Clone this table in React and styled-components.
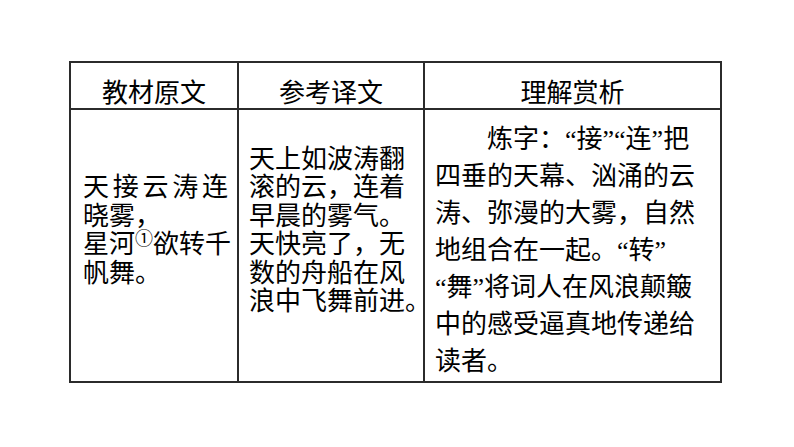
import React from 'react';
import styled, { createGlobalStyle } from 'styled-components';

const GlobalStyle = createGlobalStyle`
  html, body {
    margin: 0;
    padding: 0;
    background: #ffffff;
  }
  body {
    font-family: "Liberation Serif", "Noto Sans CJK SC", serif;
    color: #000000;
  }
`;

const Page = styled.div`
  width: 794px;
  height: 447px;
  box-sizing: border-box;
  padding: 61px 0 0 69px;
`;

const Table = styled.table`
  border-collapse: collapse;
  table-layout: fixed;
  width: 653px;
`;

const Col = styled.col`
  width: ${p => p.$w}px;
`;

const HeadCell = styled.th`
  height: 47px;
  box-sizing: border-box;
  border: 2px solid #2b2b2b;
  padding: 16px 0 0;
  font-weight: normal;
  font-size: 26px;
  line-height: 26px;
  text-align: center;
  vertical-align: middle;
`;

const BodyCell = styled.td`
  height: 273px;
  box-sizing: border-box;
  border: 2px solid #2b2b2b;
  padding: ${p => p.$pad};
  vertical-align: ${p => (p.$top ? 'top' : 'middle')};
  font-size: 26px;
  line-height: ${p => p.$lh}px;
`;

const Line = styled.div`
  white-space: nowrap;
  text-indent: ${p => (p.$indent ? '52px' : '0')};
  ${p => p.$spread && `
    width: 145px;
    text-align: justify;
    text-align-last: justify;
  `}
`;

const Note = styled.span`
  font-size: 18px;
  vertical-align: 8px;
  line-height: 0;
`;

const Half = styled.span`
  font-feature-settings: "halt";
`;

const translation = [
  '天上如波涛翻',
  '滚的云，连着',
  '早晨的雾气。',
  '天快亮了，无',
  '数的舟船在风',
];

const analysis = [
  '四垂的天幕、汹涌的云',
  '涛、弥漫的大雾，自然',
  '地组合在一起。“转”',
  '“舞”将词人在风浪颠簸',
  '中的感受逼真地传递给',
  '读者。',
];

export default function App() {
  return (
    <>
      <GlobalStyle />
      <Page>
        <Table>
          <colgroup>
            <Col $w={168} />
            <Col $w={186} />
            <Col $w={297} />
          </colgroup>
          <thead>
            <tr>
              <HeadCell>教材原文</HeadCell>
              <HeadCell>参考译文</HeadCell>
              <HeadCell>理解赏析</HeadCell>
            </tr>
          </thead>
          <tbody>
            <tr>
              <BodyCell $pad="0 0 29px 12px" $lh={28.5}>
                <Line $spread>天接云涛连</Line>
                <Line>晓雾，</Line>
                <Line>星河<Note>①</Note>欲转千</Line>
                <Line>帆舞。</Line>
              </BodyCell>
              <BodyCell $pad="0 0 29px 10px" $lh={28.5}>
                {translation.map(t => (
                  <Line key={t}>{t}</Line>
                ))}
                <Line>浪中飞舞前进<Half>。</Half></Line>
              </BodyCell>
              <BodyCell $top $pad="11px 0 0 10px" $lh={37}>
                <Line $indent>炼字：“接”“连”把</Line>
                {analysis.map(t => (
                  <Line key={t}>{t}</Line>
                ))}
              </BodyCell>
            </tr>
          </tbody>
        </Table>
      </Page>
    </>
  );
}
